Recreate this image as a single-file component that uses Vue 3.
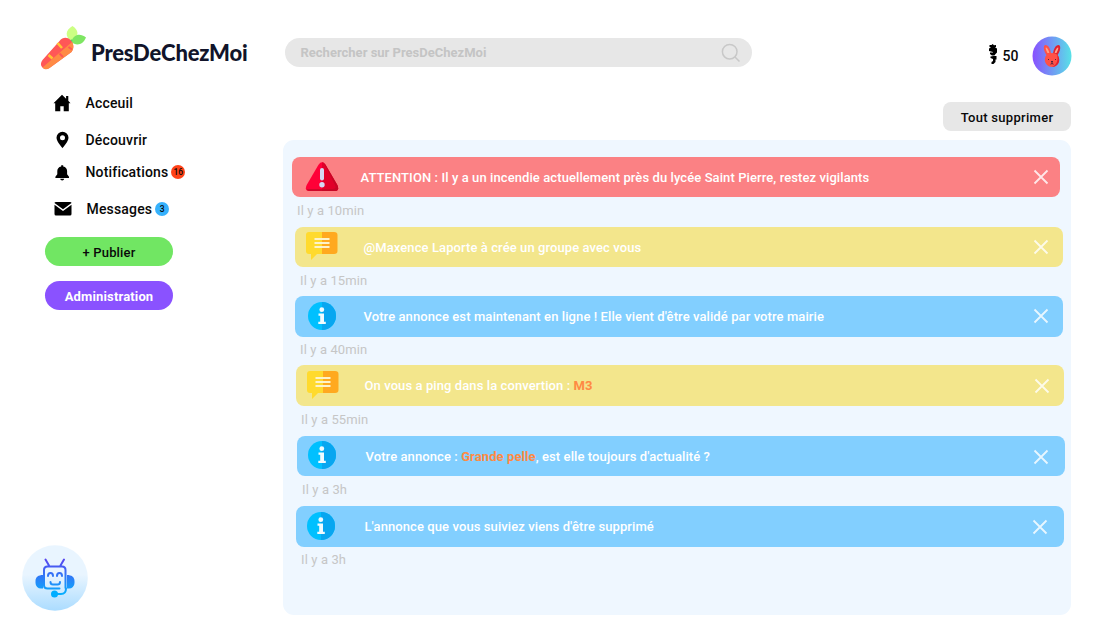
<script setup>
const notifications = [
  { type: 'alert', text: 'ATTENTION : Il y a un incendie actuellement près du lycée Saint Pierre, restez vigilants', time: 'Il y a 10min' },
  { type: 'message', text: '@Maxence Laporte à crée un groupe avec vous', time: 'Il y a 15min' },
  { type: 'info', text: "Votre annonce est maintenant en ligne ! Elle vient d'être validé par votre mairie", time: 'Il y a 40min' },
  { type: 'message', text: 'On vous a ping dans la convertion : ', mark: 'M3', time: 'Il y a 55min' },
  { type: 'info', text: 'Votre annonce : ', mark: 'Grande pelle', end: ", est elle toujours d'actualité ?", time: 'Il y a 3h' },
  { type: 'info', text: "L'annonce que vous suiviez viens d'être supprimé", time: 'Il y a 3h' }
]
</script>

<template>
  <div class="page">
    <aside class="sidebar">
      <div class="brand">
        <svg class="carrot" width="46" height="46" viewBox="0 0 46 46">
          <path d="M31 15C25 11 25 4 32.500 0c6 4 7 9 .5 15z" fill="#ccff83" />
          <path d="M31 16c3-8 9-9 15-4.500-3 7-9 9-15 4.500z" fill="#7ee663" />
          <path d="M28 18l4-4" stroke="#54d768" stroke-width="2" />
          <path d="M19.500 15c3-4 8-4 11-1s4 8 1 12L9.500 42c-3 2-6 1-7.500-1s-1.500-4 .5-7z" fill="#ff5757" />
          <path d="M32 16c2 3 2 7-.5 10L9.500 42c-2.500 2-5.500 1.500-7-.5z" fill="#ff8b45" />
          <path d="M17.500 17l4.500 5M8.500 29l4 3.500" stroke="#ffc533" stroke-width="2.600" />
          <path d="M23 31l-3.500-3.500M32 23.500l-3.500-2.500" stroke="#ff5757" stroke-width="2" />
        </svg>
        <span class="name">PresDeChezMoi</span>
      </div>
      <nav>
        <a class="link home">
          <svg width="18" height="18" viewBox="0 0 18 18"><path d="M9 .8L.5 9.200h1.700v8h5.100v-5h3.400v5h5.100v-8h1.700L15.300 6.800V2h-2.200v2.700z" /></svg>
          <span>Acceuil</span>
        </a>
        <a class="link discover">
          <svg width="18" height="18" viewBox="0 0 18 18"><path fill-rule="evenodd" d="M9.500.8a6 6 0 0 0-6 6c0 3.700 6 10.400 6 10.400s6-6.700 6-10.400a6 6 0 0 0-6-6zm0 3.400a2.500 2.500 0 1 1 0 5 2.500 2.500 0 0 1 0-5z" /></svg>
          <span>Découvrir</span>
        </a>
        <a class="link notifs">
          <svg width="18" height="18" viewBox="0 0 18 18"><path d="M8.200 3.400V2.200h2v1.200c2.700.5 3.900 2.400 3.900 4.600v3.200l1.900 2.500V15H2.400v-1.300l1.900-2.500V8c0-2.200 1.200-4.100 3.900-4.600zM7.200 15.800h4c-.2 1.200-1 1.700-2 1.700s-1.800-.5-2-1.700z" /></svg>
          <span>Notifications</span><b class="badge red">16</b>
        </a>
        <a class="link messages">
          <svg width="18" height="18" viewBox="0 0 18 18"><path d="M2 2h14q1.500 0 1.500 1L9 9.200.5 3Q.5 2 2 2zM.5 4.700L9 11l8.500-6.300V14q0 1.500-1.500 1.500H2Q.5 15.500.5 14z" /></svg>
          <span>Messages</span><b class="badge blue">3</b>
        </a>
      </nav>
      <button class="pill publish">+ Publier</button>
      <button class="pill admin">Administration</button>
      <div class="bot">
        <svg width="66" height="66" viewBox="0 0 66 66">
          <defs>
            <linearGradient id="botBack" x2="0" y2="1"><stop offset=".45" stop-color="#e9f5ff" /><stop offset="1" stop-color="#abdcff" /></linearGradient>
            <linearGradient id="botLine" gradientUnits="userSpaceOnUse" x1="0" y1="14" x2="0" y2="52"><stop stop-color="#5945ef" /><stop offset="1" stop-color="#00b7ff" /></linearGradient>
          </defs>
          <circle cx="33" cy="33" r="32.800" fill="url(#botBack)" />
          <g fill="none" stroke="url(#botLine)" stroke-width="2" stroke-linecap="round" stroke-linejoin="round">
            <path d="M27 20.500l-3.500-6M38.500 20.500l3.500-6M43.500 43V25q0-3.500-3.500-3.500H25.500q-3.500 0-3.500 3.500v15.500q0 3 3.500 3h12" />
            <path d="M26 31c0-4 5-4 5 0M35 31c0-4 5-4 5 0M28.500 37q0 2.500 2.500 2.500h4.500q2.500 0 2.500-2.500M44 43.500q0 5.500-5 5.500h-5" />
          </g>
          <path d="M21 30v13.500h-2a5.500 5.500 0 0 1-5.500-5.500v-2c0-4 3-6 7.500-6zM45 30v13.500h2a5.500 5.500 0 0 0 5.500-5.500v-2c0-4-3-6-7.500-6z" fill="url(#botLine)" />
          <circle cx="32.500" cy="49" r="3.500" fill="#00adff" />
        </svg>
      </div>
    </aside>

    <main>
      <header>
        <div class="search">
          <span>Rechercher sur PresDeChezMoi</span>
          <svg width="20" height="20" viewBox="0 0 20 20" fill="none" stroke="#c8c8c8" stroke-width="1.500"><circle cx="8.700" cy="8.700" r="7.300" /><path d="M14 14l4.500 4.500" /></svg>
        </div>
        <div class="account">
          <svg class="coin" width="10" height="21" viewBox="0 0 10 21"><path d="M3.500 1l1.200-1L6 1.200 8 1v2l-1 .5L9 4.500v4L7.500 10l-1 1.500H4L2 10V8.500h3V8L1 7V4.500l2-1L1.500 3V1zM5.500 12h3v3.500h-1V18l-2 2H3.500v-2L5 17v-2L2.500 14v-1.500z" /></svg>
          <span class="points">50</span>
          <svg class="avatar" width="40" height="40" viewBox="0 0 40 40">
            <defs><linearGradient id="avatarBack"><stop stop-color="#8950ff" /><stop offset="1" stop-color="#58e2e7" /></linearGradient></defs>
            <circle cx="20" cy="20" r="19.500" fill="url(#avatarBack)" />
            <path d="M15 20C11 14 11 9 13.500 9c3 0 5 4 5.500 9z" fill="#ff5148" />
            <path d="M25 20c4-6 4-11 1.500-11-3 0-5 4-5.500 9z" fill="#e1202f" />
            <path d="M15.500 17c-2-4-2.200-6-1.300-5.500C16 12.500 17 15 17.300 17zM24.500 17c2-4 2.200-6 1.300-5.500C24 12.500 23 15 22.700 17z" fill="#ffa087" />
            <path d="M20 17c5 0 7.200 3.500 7.200 7S24 31 20 31s-7.200-3.500-7.200-7 2.200-7 7.200-7z" fill="#ff5148" />
            <path d="M25 18.500c1.500 1.300 2.200 3.500 2.200 5.500 0 4-3.200 7-7.200 7 5-2 6.500-7 5-12.500z" fill="#e1202f" />
            <path d="M16.500 23v1M23.500 23v1M19 25.500h2M20 26v1.500l-1.500.7M20 27.500l1.500.7" fill="none" stroke="#53243f" stroke-width="1" />
          </svg>
        </div>
      </header>
      <button class="clear">Tout supprimer</button>
      <section class="panel">
        <article v-for="(n, i) in notifications" :key="i" class="item">
          <div class="bar" :class="n.type">
            <svg v-if="n.type === 'alert'" class="icon" width="34" height="30" viewBox="0 0 34 30">
              <path d="M13.500 2.700Q17-2 20.500 2.700L32.300 23Q35 29 29 29H5q-6 0-3.300-6z" fill="#ff0037" />
              <path d="M17 .3q2 0 3.500 2.400L32.300 23Q35 29 29 29H17z" fill="#e10029" />
              <path d="M19 1.300l1.500 1.400L32.300 23Q35 29 29 29H5q-3 0-3.500-2H28q4 0 2-4z" fill="#b80924" opacity=".65" />
              <path d="M17 8v8.500" stroke="#d5d8f3" stroke-width="4" stroke-linecap="round" /><circle cx="17" cy="22.700" r="2.700" fill="#d5d8f3" />
            </svg>
            <svg v-else-if="n.type === 'message'" class="icon" width="34" height="30" viewBox="0 0 34 30">
              <path d="M4 1h13v22h-5l-6 6v-6H4q-3 0-3-3V4q0-3 3-3z" fill="#ffda2d" /><path d="M17 1h12q3.500 0 3.500 3v16q0 3-3.500 3H17z" fill="#ffa91f" />
              <path d="M9.500 8h15M9.500 12h15M9.500 16h15" stroke="#fdf3c9" stroke-width="1.900" />
            </svg>
            <svg v-else class="icon" width="34" height="30" viewBox="0 0 34 30">
              <circle cx="17" cy="15" r="14" fill="#00c0ff" /><path d="M17 1a14 14 0 0 1 0 28z" fill="#08a6f0" />
              <circle cx="16.800" cy="8.700" r="2.400" fill="#f0fbff" /><path d="M13.500 12.500H19v8.300h1.800V23h-7.500v-2.200h1.900v-6h-1.700z" fill="#f0fbff" />
            </svg>
            <p>{{ n.text }}<strong v-if="n.mark">{{ n.mark }}</strong>{{ n.end }}</p>
            <svg class="close" width="16" height="16" viewBox="0 0 16 16"><path d="M1.500 1.500l13 13M14.500 1.500l-13 13" stroke="#fff" stroke-opacity=".82" stroke-width="1.800" /></svg>
          </div>
          <time>{{ n.time }}</time>
        </article>
      </section>
    </main>
  </div>
</template>

<style>
body { margin: 0; background: #fff; }
</style>

<style scoped>
* { box-sizing: border-box; }
.page { display: flex; width: 1098px; height: 633px; overflow: hidden; font-family: Roboto, sans-serif; color: #090909; }
svg { display: block; flex: none; }
button { border: 0; padding: 0; font: inherit; color: inherit; display: block; }
.sidebar { width: 283px; flex: none; display: flex; flex-direction: column; height: 633px; }
.brand { display: flex; align-items: flex-start; height: 92px; padding: 26px 0 0 40px; flex: none; }
.name { margin: 12px 0 0 5px; font: 900 22px/30px Lato, sans-serif; color: #11142a; letter-spacing: -.2px; }
nav { height: 145px; flex: none; }
.link { display: flex; align-items: center; height: 22px; padding-left: 53px; font-size: 14px; font-weight: 500; letter-spacing: .17px; }
.link svg + span { margin-left: 14.500px; }
.discover { margin-top: 15px; }
.notifs { margin-top: 10px; }
.messages { margin-top: 15px; padding-left: 54px; }
.badge { display: flex; align-items: center; justify-content: center; width: 14px; height: 14px; border-radius: 50%; margin-left: 3px; font-size: 8.500px; font-weight: 500; letter-spacing: 0; }
.red { background: #ff4218; }
.blue { background: #36b1fc; }
.pill { width: 128px; height: 29px; margin-left: 45px; border-radius: 15px; font-size: 13px; font-weight: 500; letter-spacing: .15px; padding-top: 2px; flex: none; }
.publish { background: #71e663; }
.admin { background: #8a52ff; color: #fff; margin-top: 15px; font-weight: 700; }
.bot { margin: auto 0 22px 22px; }
main { width: 788px; flex: none; }
header { display: flex; justify-content: space-between; height: 102px; padding-top: 36px; }
.search { display: flex; align-items: center; justify-content: space-between; width: 467px; height: 29px; margin: 2px 0 0 2px; padding: 0 11px 0 15.500px; border-radius: 15px; background: #e7e7e7; color: #c4c4c4; font-size: 13px; font-weight: 700; }
.account { display: flex; align-items: center; height: 40px; margin-right: -1px; }
.coin { margin: -3px 5px 0 0; }
.points { font-size: 14px; font-weight: 500; margin-right: 13.500px; }
.clear { width: 128px; height: 29px; margin-left: auto; border-radius: 8px; background: #e7e7e7; font-size: 13px; font-weight: 500; letter-spacing: .3px; padding-top: 1px; }
.panel { height: 475px; margin-top: 9px; padding: 16.500px 0 0 9px; border-radius: 11px; background: #eff7ff; }
.item { height: 70px; width: 767.500px; }
.item:nth-child(2), .item:nth-child(3) { margin-left: 3px; }
.item:nth-child(2) { height: 69.500px; }
.item:nth-child(3) { height: 69px; }
.item:nth-child(4) { margin-left: 4px; height: 70.500px; }
.item:nth-child(5) { margin-left: 5px; height: 70.500px; }
.item:nth-child(6) { margin-left: 4px; }
.bar { display: flex; align-items: center; height: 40.500px; border-radius: 8px; padding: 0 11px 0 13px; color: #fff; }
.alert { background: #fb8184; }
.message { background: #f3e68c; }
.info { background: #82cfff; }
.item:nth-child(2) .bar,
.item:nth-child(3) .bar,
.item:nth-child(4) .bar { padding: 0 14px 0 10px; }
.item:nth-child(5) .bar,
.item:nth-child(6) .bar { padding: 0 15.500px 0 8px; }
.item:nth-child(n+4) .close { margin-top: 2px; }
.item:nth-child(5) .icon { margin-bottom: 1px; }
.message .icon { margin-bottom: 2px; }
.item:nth-child(4) .icon { margin-bottom: 1px; }
p { flex: 1; margin: 2px 0 0 24.500px; font-size: 13px; font-weight: 500; letter-spacing: .09px; line-height: 18px; white-space: pre; }
.item:nth-child(1) p { margin-left: 21.500px; }
.item:nth-child(5) p { margin-left: 26.500px; }
.item:nth-child(6) p { margin-left: 26.500px; }
strong { color: #ff8a43; font-weight: 700; }
time { display: block; margin: 5px 0 0 5px; font-size: 13px; line-height: 18px; color: #c6c6c6; letter-spacing: .12px; }
.item:nth-child(3) time, .item:nth-child(6) time { margin-top: 4px; }
</style>
